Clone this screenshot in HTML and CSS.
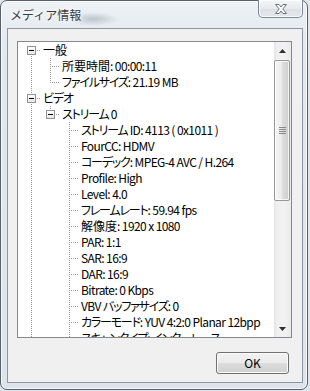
FILE: index.html
```html
<!DOCTYPE html>
<html lang="ja">
<head>
<meta charset="utf-8">
<title>メディア情報</title>
<link rel="stylesheet" href="styles.css">
</head>
<body>
<div class="window">
  <div class="titlebar">
    <div class="title">メディア情報</div>
    <div class="close">
      <svg width="14" height="12" viewBox="0 0 14 12"><path d="M1.5 1.5 H5 L7 4 L9 1.5 H12.5 L8.8 6 L12.5 10.5 H9 L7 8 L5 10.5 H1.5 L5.2 6 Z" fill="#fdfdfd" stroke="#6e7378" stroke-width="1" stroke-linejoin="round"/></svg>
    </div>
  </div>
  <div class="client">
    <div class="tree">
      <div class="tree-content">
        <div class="row"><span class="c box first"><i></i></span><span class="t"><span class="h">一般</span></span></div>
        <div class="row"><span class="c v"></span><span class="c tee"></span><span class="t"><span class="h">所要時間</span>: 00:00:11</span></div>
        <div class="row"><span class="c v"></span><span class="c ell"></span><span class="t"><span class="k">ファイルサイズ</span>: 21.19 MB</span></div>
        <div class="row"><span class="c box mid"><i></i></span><span class="t"><span class="k">ビデオ</span></span></div>
        <div class="row"><span class="c v"></span><span class="c box last"><i></i></span><span class="t"><span class="k">ストリーム</span> 0</span></div>
        <div class="row"><span class="c v"></span><span class="c"></span><span class="c tee"></span><span class="t"><span class="k">ストリーム</span> ID: 4113 ( 0x1011 )</span></div>
        <div class="row"><span class="c v"></span><span class="c"></span><span class="c tee"></span><span class="t">FourCC: HDMV</span></div>
        <div class="row"><span class="c v"></span><span class="c"></span><span class="c tee"></span><span class="t"><span class="k">コーデック</span>: MPEG-4 AVC / H.264</span></div>
        <div class="row"><span class="c v"></span><span class="c"></span><span class="c tee"></span><span class="t">Profile: High</span></div>
        <div class="row"><span class="c v"></span><span class="c"></span><span class="c tee"></span><span class="t">Level: 4.0</span></div>
        <div class="row"><span class="c v"></span><span class="c"></span><span class="c tee"></span><span class="t"><span class="k">フレームレート</span>: 59.94 fps</span></div>
        <div class="row"><span class="c v"></span><span class="c"></span><span class="c tee"></span><span class="t"><span class="h">解像度</span>: 1920 x 1080</span></div>
        <div class="row"><span class="c v"></span><span class="c"></span><span class="c tee"></span><span class="t">PAR: 1:1</span></div>
        <div class="row"><span class="c v"></span><span class="c"></span><span class="c tee"></span><span class="t">SAR: 16:9</span></div>
        <div class="row"><span class="c v"></span><span class="c"></span><span class="c tee"></span><span class="t">DAR: 16:9</span></div>
        <div class="row"><span class="c v"></span><span class="c"></span><span class="c tee"></span><span class="t">Bitrate: 0 Kbps</span></div>
        <div class="row"><span class="c v"></span><span class="c"></span><span class="c tee"></span><span class="t">VBV <span class="k">バッファサイズ</span>: 0</span></div>
        <div class="row"><span class="c v"></span><span class="c"></span><span class="c tee"></span><span class="t"><span class="k">カラーモード</span>: YUV 4:2:0 Planar 12bpp</span></div>
        <div class="row"><span class="c v"></span><span class="c"></span><span class="c tee"></span><span class="t"><span class="k">スキャンタイプ</span>: <span class="k">インターレース</span></span></div>
      </div>
      <div class="scrollbar">
        <div class="sb-btn"><svg width="7" height="4" viewBox="0 0 7 4"><path d="M0 4 L3.5 0 L7 4 Z" fill="#2f2f2f"/></svg></div>
        <div class="track">
          <div class="thumb">
            <svg width="7" height="7" viewBox="0 0 7 7"><path d="M0 0.5 H7 M0 2.5 H7 M0 4.5 H7 M0 6.5 H7" stroke="#8a8a8a" stroke-width="1"/></svg>
          </div>
        </div>
        <div class="sb-btn"><svg width="7" height="4" viewBox="0 0 7 4"><path d="M0 0 L3.5 4 L7 0 Z" fill="#2f2f2f"/></svg></div>
      </div>
    </div>
    <div class="buttons"><button class="btn">OK</button></div>
  </div>
</div>
</body>
</html>
```

FILE: styles.css
```css
html, body {
  margin: 0;
  padding: 0;
}
body {
  background: #dfe6ee;
  width: 310px;
  height: 391px;
  overflow: hidden;
}
.window {
  box-sizing: border-box;
  width: 308px;
  height: 390px;
  border: 1px solid #56616d;
  border-radius: 7px;
  padding: 0 4px 6px 6px;
  display: flex;
  flex-direction: column;
  background:
    radial-gradient(ellipse 26px 7px at 92px 18px, rgba(90,100,112,0.30), rgba(90,100,112,0) 100%),
    linear-gradient(#eef2f6, #e3e9f0 40px, #dde4ec);
  box-shadow: inset 0 0 0 1px rgba(255,255,255,0.7);
}
.titlebar {
  height: 27px;
  display: flex;
  align-items: flex-start;
  flex: none;
}
.title {
  margin: 6px 0 0 3px;
  font: 12px/16px "Noto Sans CJK JP", sans-serif;
  color: #3a3a3a;
  text-shadow: 0 0 6px #fff, 0 0 3px #fff;
}
.close {
  margin: -1px 0 0 auto;
  width: 45px;
  height: 18px;
  box-sizing: border-box;
  border: 1px solid #7d8894;
  border-top: none;
  border-radius: 0 0 5px 5px;
  background: linear-gradient(#f4f6f8, #e6eaee 50%, #dadfe5 51%, #e4e8ec);
  box-shadow: inset 0 0 0 1px rgba(255,255,255,0.75);
  display: flex;
  align-items: center;
  justify-content: center;
}
.client {
  flex: 1;
  border: 1px solid #8b96a2;
  background: #f0f0f0;
  padding: 12px 0 0 9px;
  display: flex;
  flex-direction: column;
}
.tree {
  box-sizing: border-box;
  width: 275px;
  height: 297px;
  border: 1px solid #828790;
  background: #fff;
  display: flex;
  flex: none;
}
.tree-content {
  flex: 1;
  overflow: hidden;
  padding-left: 4px;
  font: 12px/16px "Noto Sans CJK JP", sans-serif;
  font-feature-settings: "palt";
  color: #000;
}
.row {
  display: flex;
  height: 16px;
  white-space: nowrap;
}
.c {
  flex: none;
  width: 19px;
  height: 16px;
  box-sizing: border-box;
}
.t {
  padding-left: 2px;
  letter-spacing: -0.6px;
}
.t .k {
  letter-spacing: -1.2px;
}
.t .h {
  letter-spacing: 0;
}
.v {
  background: repeating-linear-gradient(to bottom, #999 0 1px, transparent 1px 2px) 9px 0 / 1px 16px no-repeat;
}
.tee {
  background:
    repeating-linear-gradient(to right, #999 0 1px, transparent 1px 2px) 11px 8px / 8px 1px no-repeat,
    repeating-linear-gradient(to bottom, #999 0 1px, transparent 1px 2px) 9px 0 / 1px 16px no-repeat;
}
.ell {
  background:
    repeating-linear-gradient(to right, #999 0 1px, transparent 1px 2px) 11px 8px / 8px 1px no-repeat,
    repeating-linear-gradient(to bottom, #999 0 1px, transparent 1px 2px) 9px 0 / 1px 9px no-repeat;
}
.box {
  padding: 4px 0 0 5px;
}
.box i {
  display: block;
  box-sizing: border-box;
  width: 9px;
  height: 9px;
  border: 1px solid #929292;
  background:
    linear-gradient(#000, #000) 1px 3px / 5px 1px no-repeat,
    linear-gradient(#ffffff, #e6e6e6);
}
.box.first {
  background:
    repeating-linear-gradient(to right, #999 0 1px, transparent 1px 2px) 15px 8px / 4px 1px no-repeat,
    repeating-linear-gradient(to bottom, #999 0 1px, transparent 1px 2px) 9px 14px / 1px 2px no-repeat;
}
.box.mid {
  background:
    repeating-linear-gradient(to right, #999 0 1px, transparent 1px 2px) 15px 8px / 4px 1px no-repeat,
    repeating-linear-gradient(to bottom, #999 0 1px, transparent 1px 2px) 9px 0 / 1px 4px no-repeat,
    repeating-linear-gradient(to bottom, #999 0 1px, transparent 1px 2px) 9px 14px / 1px 2px no-repeat;
}
.box.last {
  background:
    repeating-linear-gradient(to right, #999 0 1px, transparent 1px 2px) 15px 8px / 4px 1px no-repeat,
    repeating-linear-gradient(to bottom, #999 0 1px, transparent 1px 2px) 9px 0 / 1px 4px no-repeat;
}
.scrollbar {
  flex: none;
  width: 17px;
  display: flex;
  flex-direction: column;
  background: linear-gradient(to right, #e2e2e2, #efefef 15%, #f2f2f2 60%, #eaeaea);
}
.sb-btn {
  height: 17px;
  flex: none;
  display: flex;
  align-items: center;
  justify-content: center;
}
.track {
  flex: 1;
  padding-top: 1px;
}
.thumb {
  box-sizing: border-box;
  width: 16px;
  height: 141px;
  border: 1px solid #979797;
  border-radius: 2px;
  background: linear-gradient(to right, #f6f6f6, #ececec 45%, #dcdcdc 55%, #cdcdcd);
  box-shadow: inset 0 0 0 1px rgba(255,255,255,0.8);
  display: flex;
  align-items: center;
  justify-content: center;
}
.buttons {
  display: flex;
  justify-content: flex-end;
  margin-top: 14px;
  padding-right: 13px;
}
.btn {
  box-sizing: border-box;
  width: 73px;
  height: 22px;
  padding: 0;
  border: 1px solid #707070;
  border-radius: 3px;
  background: linear-gradient(#f2f2f2, #ebebeb 50%, #dddddd 50%, #cfcfcf);
  box-shadow: inset 0 0 0 1px #fbfbfb;
  font: 12px/20px "Noto Sans CJK JP", sans-serif;
  color: #000;
}
```
